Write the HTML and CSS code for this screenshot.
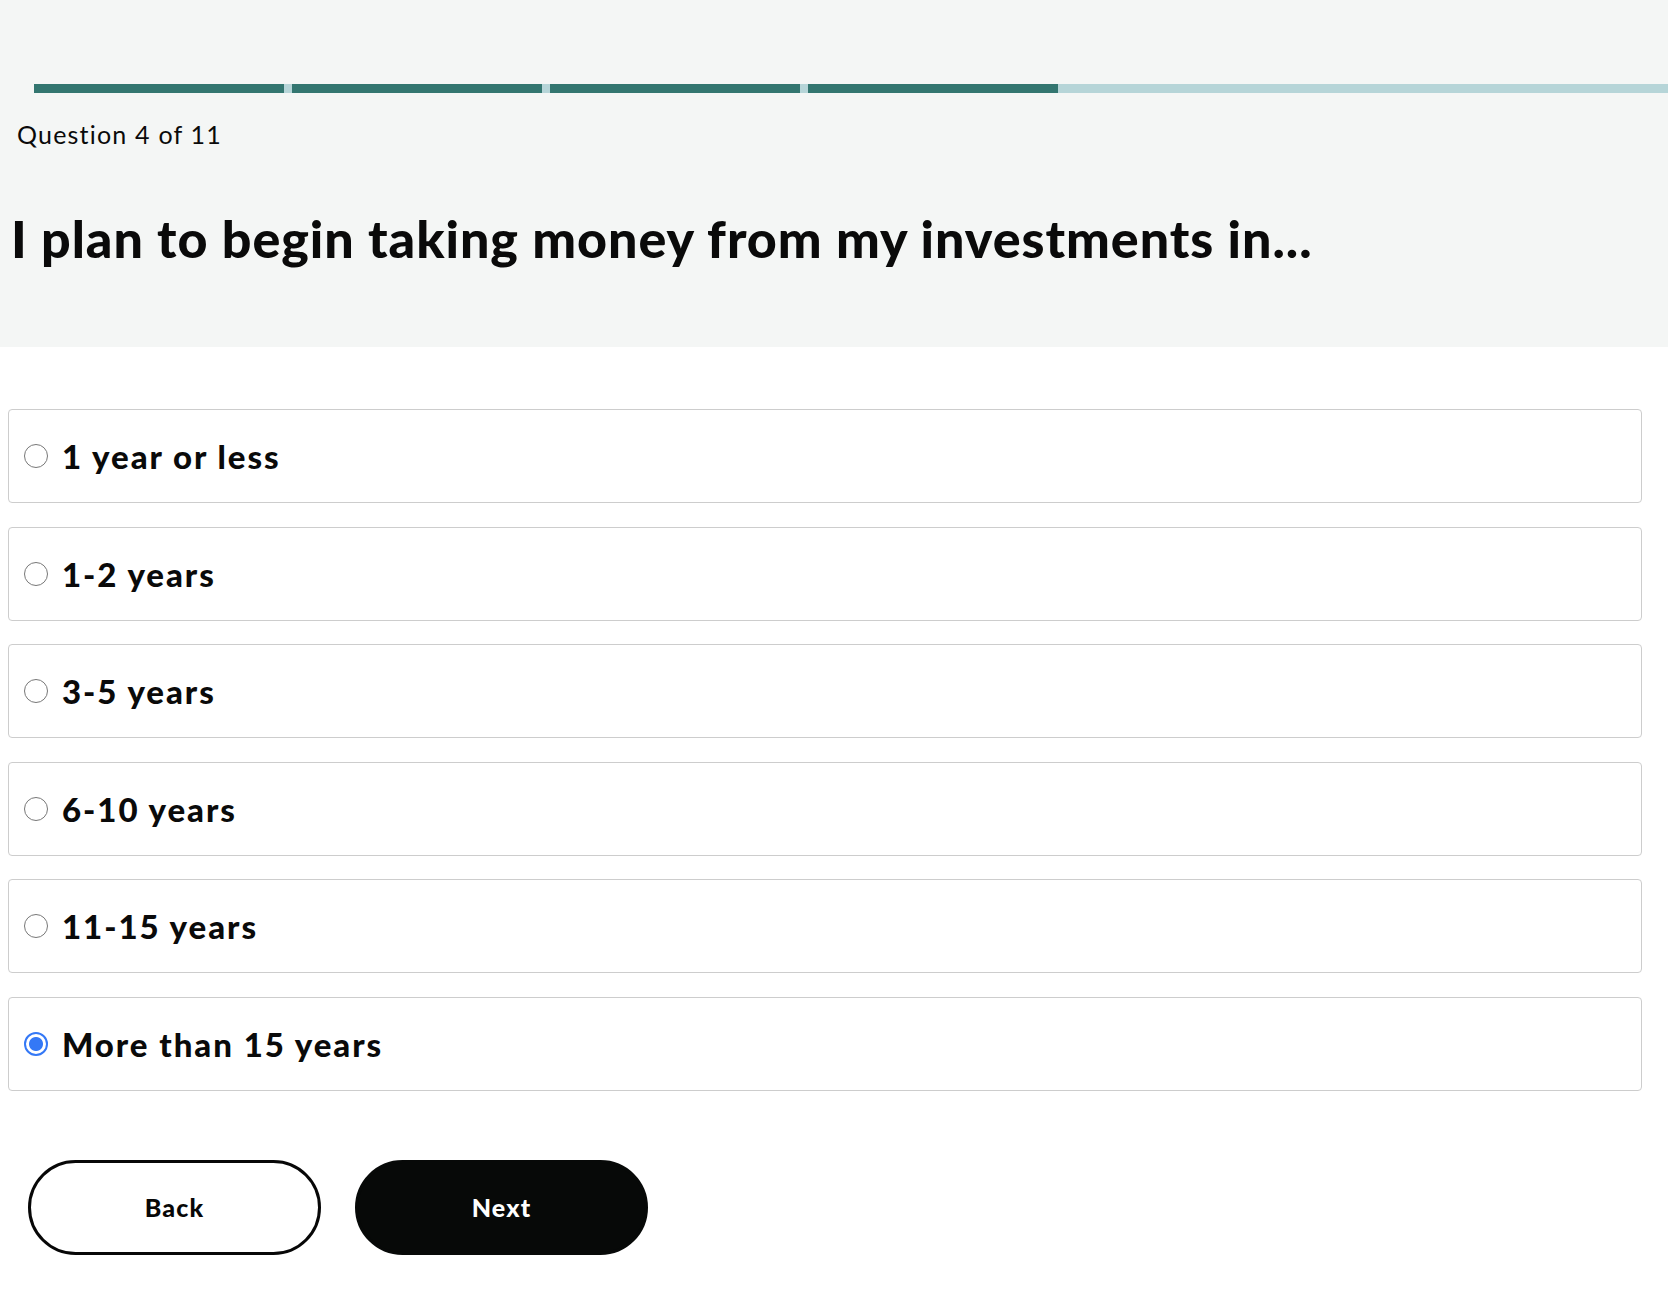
FILE: index.html
```html
<!DOCTYPE html>
<html lang="en">
<head>
<meta charset="utf-8">
<title>Question 4 of 11</title>
<link rel="stylesheet" href="styles.css">
</head>
<body>
<header class="top">
  <div class="progress">
    <span class="seg"></span><span class="seg"></span><span class="seg"></span><span class="seg"></span>
  </div>
  <p class="counter">Question 4 of 11</p>
  <h1 class="question">I plan to begin taking money from my investments in...</h1>
</header>
<main class="body">
  <form class="options">
    <label class="option"><input type="radio" name="q4" class="radio"><span class="label">1 year or less</span></label>
    <label class="option"><input type="radio" name="q4" class="radio"><span class="label">1-2 years</span></label>
    <label class="option"><input type="radio" name="q4" class="radio"><span class="label">3-5 years</span></label>
    <label class="option"><input type="radio" name="q4" class="radio"><span class="label">6-10 years</span></label>
    <label class="option"><input type="radio" name="q4" class="radio"><span class="label">11-15 years</span></label>
    <label class="option"><input type="radio" name="q4" class="radio" checked><span class="label">More than 15 years</span></label>
  </form>
  <div class="actions">
    <button type="button" class="btn btn-back">Back</button>
    <button type="button" class="btn btn-next">Next</button>
  </div>
</main>
</body>
</html>
```
FILE: styles.css
```css
* { box-sizing: border-box; }
html, body { margin: 0; padding: 0; background: #ffffff; }
body { font-family: "Lato", "Noto Sans", sans-serif; color: #0a0a0a; }

.top {
  background: #f4f6f5;
  padding: 84px 0 0 0;
  height: 347px;
}
.progress {
  margin-left: 34px;
  height: 9px;
  background: #b6d5d8;
  display: flex;
  gap: 8px;
}
.seg { width: 250px; background: #337670; }

.counter {
  margin: 26px 0 0 17px;
  font-size: 25px;
  line-height: 30px;
  font-weight: 400;
  letter-spacing: 1.2px;
}
.question {
  margin: 59px 0 0 11px;
  font-size: 52px;
  line-height: 60px;
  font-weight: 900;
  letter-spacing: 0.95px;
}

.body { padding: 62px 0 0 8px; }
.options { display: flex; flex-direction: column; gap: 23.5px; width: 1634px; }
.option {
  display: flex;
  align-items: center;
  height: 94px;
  border: 1px solid #cdcdcd;
  border-radius: 4px;
  padding-left: 15px;
  background: #fff;
}
.radio {
  appearance: none;
  -webkit-appearance: none;
  margin: 0 14px 0 0;
  width: 24px;
  height: 24px;
  border: 1.5px solid #777;
  border-radius: 50%;
  background: #fff;
  flex: none;
}
.radio:checked {
  border: 2px solid #3478f6;
  background: radial-gradient(circle, #3478f6 0 6.5px, #fff 7.5px);
}
.label { font-size: 33px; font-weight: 900; letter-spacing: 1.95px; }

.actions { display: flex; gap: 34px; margin: 69px 0 0 20px; }
.btn {
  width: 293px;
  height: 95px;
  border-radius: 48px;
  font-family: inherit;
  font-size: 25px;
  font-weight: 900;
  letter-spacing: 1.2px;
  cursor: pointer;
}
.btn-back { background: #fff; border: 3px solid #070707; color: #070707; }
.btn-next { background: #070908; border: 3px solid #070908; color: #fff; }
```
